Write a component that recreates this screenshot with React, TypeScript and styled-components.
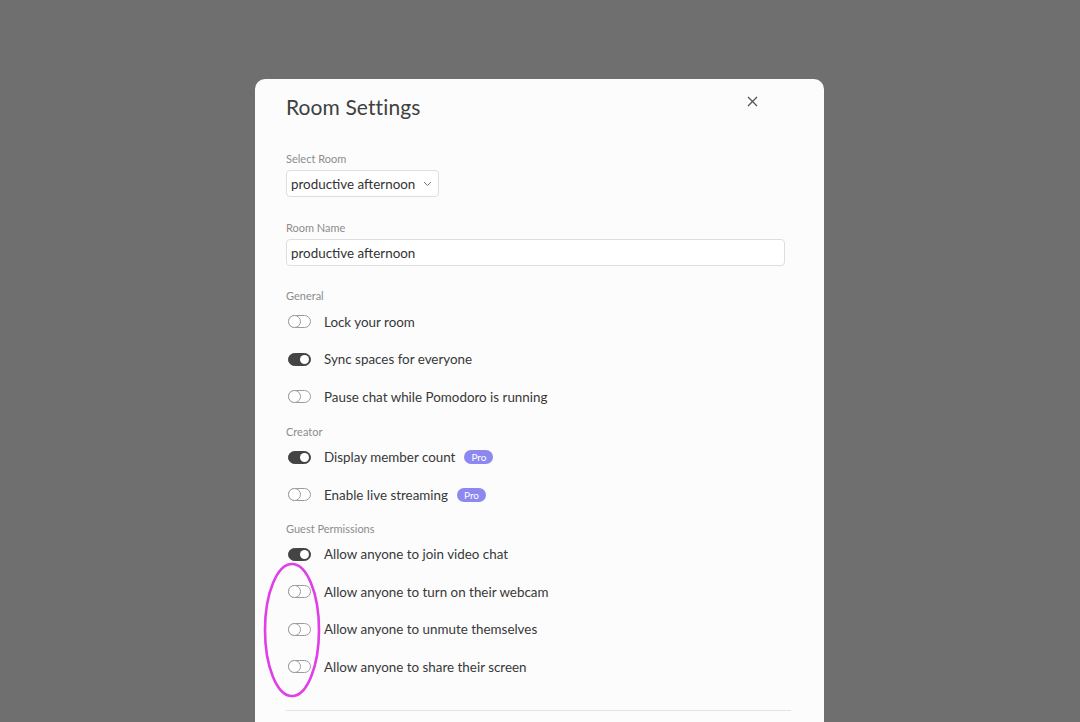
import React from "react";
import styled, { createGlobalStyle } from "styled-components";

const Global = createGlobalStyle`
  html, body { margin: 0; padding: 0; }
  body {
    background: #6f6f6f;
    font-family: Lato, "Noto Sans", sans-serif;
    height: 722px;
    overflow: hidden;
  }
`;

const Page = styled.div`
  display: flex;
  justify-content: center;
  padding-top: 79px;
  padding-right: 1px;
`;

const Modal = styled.div`
  position: relative;
  width: 569px;
  height: 700px;
  box-sizing: border-box;
  background: #fcfcfc;
  border-radius: 10px 10px 0 0;
  padding: 13px 39px 0 31px;
`;

const Header = styled.div`
  display: flex;
  justify-content: space-between;
  align-items: center;
  height: 28px;
`;

const Title = styled.h1`
  margin: 0;
  font-size: 21px;
  font-weight: 400;
  color: #404040;
  letter-spacing: 0.1px;
`;

const CloseButton = styled.button`
  border: none;
  background: none;
  padding: 0;
  margin-right: 25px;
  margin-top: -9px;
  width: 16px;
  height: 16px;
  display: flex;
  align-items: center;
  justify-content: center;
  cursor: pointer;
`;

const Label = styled.div<{ $top: number; $bottom?: number }>`
  font-size: 11px;
  line-height: 14px;
  color: #8c8c8c;
  margin-top: ${(p) => p.$top}px;
  margin-bottom: ${(p) => p.$bottom ?? 0}px;
`;

const SelectBox = styled.div`
  display: inline-flex;
  align-items: center;
  gap: 8px;
  height: 27px;
  box-sizing: border-box;
  padding: 0 6px 0 4px;
  border: 1px solid #dedede;
  border-radius: 4px;
  background: #fff;
  font-size: 13.4px;
  color: #333;
`;

const TextInput = styled.div`
  display: flex;
  align-items: center;
  height: 27px;
  box-sizing: border-box;
  padding: 0 4px;
  border: 1px solid #dedede;
  border-radius: 4px;
  background: #fff;
  font-size: 13.4px;
  color: #333;
`;

const Section = styled.div``;

const Row = styled.div`
  display: flex;
  align-items: center;
  height: 37.5px;
  padding-left: 2px;
  gap: 13px;
  font-size: 13.4px;
  color: #383838;
`;

const Track = styled.span<{ $on: boolean }>`
  position: relative;
  display: inline-block;
  width: 23px;
  height: 13px;
  box-sizing: border-box;
  border-radius: 7px;
  border: 1px solid ${(p) => (p.$on ? "#444" : "#9c9c9c")};
  background: ${(p) => (p.$on ? "#444" : "#fff")};
  flex: none;
`;

const Knob = styled.span<{ $on: boolean }>`
  position: absolute;
  top: ${(p) => (p.$on ? "1px" : "-1px")};
  left: ${(p) => (p.$on ? "11px" : "-1px")};
  width: ${(p) => (p.$on ? "9px" : "13px")};
  height: ${(p) => (p.$on ? "9px" : "13px")};
  box-sizing: border-box;
  border-radius: 50%;
  background: #fff;
  border: ${(p) => (p.$on ? "none" : "1px solid #9c9c9c")};
`;

const Text = styled.span`
  display: inline-flex;
  align-items: center;
  gap: 9px;
`;

const Pro = styled.span`
  display: inline-flex;
  align-items: center;
  height: 14px;
  padding: 0 7px;
  border-radius: 7px;
  background: #8c88f0;
  color: #fff;
  font-size: 10px;
`;

const Divider = styled.div`
  margin-top: 24px;
  height: 1px;
  background: #e4e4e4;
  margin-right: -6px;
`;

const Annotation = styled.svg`
  position: absolute;
  left: 8px;
  top: 482px;
  overflow: visible;
`;

type Item = { label: string; on: boolean; pro?: boolean };

const Toggle = ({ on }: { on: boolean }) => (
  <Track $on={on}>
    <Knob $on={on} />
  </Track>
);

const Rows = ({ items }: { items: Item[] }) => (
  <>
    {items.map((it) => (
      <Row key={it.label}>
        <Toggle on={it.on} />
        <Text>
          {it.label}
          {it.pro && <Pro>Pro</Pro>}
        </Text>
      </Row>
    ))}
  </>
);

export default function App() {
  return (
    <>
      <Global />
      <Page>
        <Modal>
          <Header>
            <Title>Room Settings</Title>
            <CloseButton aria-label="Close">
              <svg width="11" height="11" viewBox="0 0 11 11">
                <path d="M1 1L10 10M10 1L1 10" stroke="#555" strokeWidth="1.3" />
              </svg>
            </CloseButton>
          </Header>

          <Label $top={32} $bottom={4}>Select Room</Label>
          <SelectBox>
            productive afternoon
            <svg width="9" height="6" viewBox="0 0 9 6">
              <path d="M1 1L4.5 4.5L8 1" stroke="#777" strokeWidth="1" fill="none" />
            </svg>
          </SelectBox>

          <Label $top={24} $bottom={4}>Room Name</Label>
          <TextInput>productive afternoon</TextInput>

          <Section>
            <Label $top={23}>General</Label>
            <Rows
              items={[
                { label: "Lock your room", on: false },
                { label: "Sync spaces for everyone", on: true },
                { label: "Pause chat while Pomodoro is running", on: false },
              ]}
            />
          </Section>

          <Section>
            <Label $top={9}>Creator</Label>
            <Rows
              items={[
                { label: "Display member count", on: true, pro: true },
                { label: "Enable live streaming", on: false, pro: true },
              ]}
            />
          </Section>

          <Section>
            <Label $top={8}>Guest Permissions</Label>
            <Rows
              items={[
                { label: "Allow anyone to join video chat", on: true },
                { label: "Allow anyone to turn on their webcam", on: false },
                { label: "Allow anyone to unmute themselves", on: false },
                { label: "Allow anyone to share their screen", on: false },
              ]}
            />
          </Section>

          <Divider />

          <Annotation width="60" height="138" viewBox="0 0 60 138">
            <ellipse cx="29" cy="69" rx="27" ry="66" fill="none" stroke="#e03ee6" strokeWidth="2.6" />
          </Annotation>
        </Modal>
      </Page>
    </>
  );
}
